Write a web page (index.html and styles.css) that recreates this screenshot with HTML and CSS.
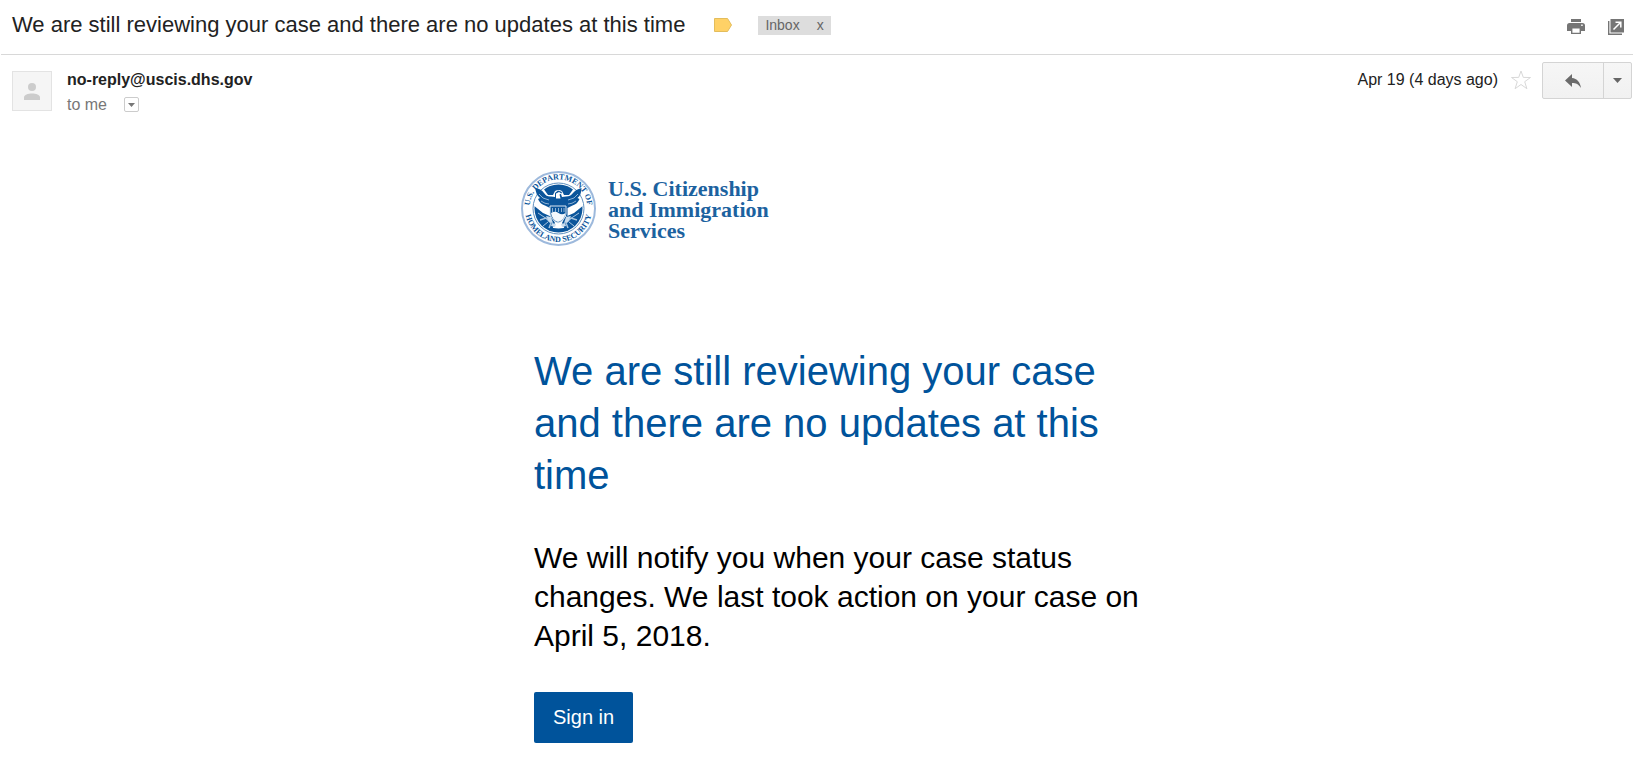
FILE: index.html
```html
<!DOCTYPE html>
<html lang="en">
<head>
<meta charset="utf-8">
<title>We are still reviewing your case and there are no updates at this time</title>
<link rel="stylesheet" href="styles.css">
</head>
<body>
<header class="subject-bar">
  <h1 class="subject">We are still reviewing your case and there are no updates at this time</h1>
  <button class="icon-btn importance" aria-label="Important">
    <svg width="18" height="14" viewBox="0 0 18 14"><path d="M.5.5h13l4 6.5-4 6.5H.5z" fill="#ffd166" stroke="#e3bd5c"/></svg>
  </button>
  <div class="label"><span>Inbox</span><button class="label-remove" aria-label="Remove label Inbox">x</button></div>
  <div class="tools">
    <button class="icon-btn" aria-label="Print all">
      <svg width="18" height="16" viewBox="0 0 18 16"><path d="M4 0h10v3H4z" fill="#757575"/><path fill-rule="evenodd" d="M2.500 4h13A2.500 2.500 0 0 1 18 6.500V12h-4V9H4v3H0V6.500A2.500 2.500 0 0 1 2.500 4zM14.200 5.500v1.500h1.500V5.500z" fill="#757575"/><path d="M4.700 8.700h8.600v5.700H4.700z" fill="#fff" stroke="#757575" stroke-width="1.400"/></svg>
    </button>
    <button class="icon-btn" aria-label="In new window">
      <svg width="16" height="16" viewBox="0 0 16 16"><path d="M.7 2v13.300H14" fill="none" stroke="#757575" stroke-width="1.400"/><path d="M2.500 0H16v13.500H2.500z" fill="#757575"/><path d="M5.500 10.500L12 4M7.500 3.200h5.300v5.300" fill="none" stroke="#fff" stroke-width="1.500"/></svg>
    </button>
  </div>
</header>
<main>
  <section class="message-head">
    <div class="avatar">
      <svg width="16" height="17" viewBox="0 0 16 17"><circle cx="8" cy="4" r="4" fill="#ccc"/><path d="M0 17v-2.500C0 11.800 4 10.500 8 10.500s8 1.300 8 4V17z" fill="#ccc"/></svg>
    </div>
    <div class="people">
      <strong class="sender">no-reply@uscis.dhs.gov</strong>
      <div class="recipient"><span>to me</span>
        <button class="details" aria-label="Show details"><svg width="7" height="4" viewBox="0 0 7 4"><path d="M0 0h7L3.500 4z" fill="#777"/></svg></button>
      </div>
    </div>
    <div class="meta">
      <time datetime="2018-04-19">Apr 19 (4 days ago)</time>
      <button class="icon-btn" aria-label="Star">
        <svg width="20" height="20" viewBox="0 0 20 20"><path d="M10 1l2.300 6.400 7.200.1-5.800 4.200 2.200 7L10 14.500 4.100 18.700l2.200-7L.5 7.500l7.200-.1z" fill="#fff" stroke="#d8d8d8"/></svg>
      </button>
    </div>
    <div class="actions">
      <button class="reply" aria-label="Reply"><svg width="16" height="14" viewBox="0 0 16 14"><path d="M7 0v4c5 .6 8 4 9 10-2.300-3.700-5-5-9-5v4L0 6.500z" fill="#6b6b6b"/></svg></button>
      <button class="more" aria-label="More"><svg width="9" height="5" viewBox="0 0 9 5"><path d="M0 0h9L4.500 5z" fill="#666"/></svg></button>
    </div>
  </section>
  <article class="mail">
    <div class="brand">
      <svg class="seal" width="75" height="75" viewBox="0 0 75 75" role="img" aria-label="U.S. Department of Homeland Security seal">
        <defs>
          <path id="arc-top" d="M9.500 45A29 29 0 1 1 65.500 45"/>
          <path id="arc-bottom" d="M4 37.500A33.500 33.500 0 0 0 71 37.500"/>
          <clipPath id="disc"><circle cx="37.500" cy="37.500" r="24"/></clipPath>
        </defs>
        <circle cx="37.500" cy="37.500" r="36.500" fill="#fff" stroke="#9db9dc" stroke-width="2"/>
        <circle cx="37.500" cy="37.500" r="25.500" fill="#fff" stroke="#5f90bf"/>
        <text class="seal-text"><textPath href="#arc-top" startOffset="50%" text-anchor="middle">U.S. DEPARTMENT OF</textPath></text>
        <text class="seal-text"><textPath href="#arc-bottom" startOffset="50%" text-anchor="middle">HOMELAND SECURITY</textPath></text>
        <g clip-path="url(#disc)">
          <path d="M22 17Q37.500 8 53 17l-5 7h-5l-2-4q-3.500-2-7 0l-2 4h-5z" fill="#0b559b"/>
          <path d="M12 34l10 8 9 4 3 6-5 11Q12 58 12 34zM63 34l-10 8-9 4-3 6 5 11Q63 58 63 34z" fill="#0b559b"/>
          <path d="M27 55q10.500 5 21 0l-2 8H29z" fill="#0b559b"/>
          <path d="M19 49l6-2 5 5-2 5M56 49l-6-2-5 5 2 5" fill="none" stroke="#a9c5df" stroke-width="1.500"/>
          <path d="M17 42l9 6M58 42l-9 6M22 55l5-4M53 55l-5-4" fill="none" stroke="#a9c5df"/>
        </g>
        <path d="M14.500 17q6 1 8.500 5t7 3.500l4 .5v-4l3-2.500 4 1.500-1 2 1 3 4-.5q4.500 0 7-3.500t8.500-5q0 7-4 10l2 1q-2 5-7 6.500l-5 2.500v8H29v-8l-5-2.500q-5-1.500-7-6.500l2-1q-4.500-3.500-4.500-10z" fill="#0b559b"/>
        <path d="M35 22.500l3-1.500 2.500 1.500-2 1 1 4H35z" fill="#fff"/>
        <path d="M18 23q3 5 10 6M57 23q-3 5-10 6M20 30q4 3 8 3M55 30q-4 3-8 3" fill="none" stroke="#8fb3d5" stroke-width="1"/>
        <path d="M29 35h16v8q-2 7-8 9-6-2-8-9z" fill="#0b559b" stroke="#dce8f3"/>
        <path d="M30 42q4-2.500 7.500 0t7 0q-1 7-7.500 9-6-2-7-9z" fill="#f4f8fc"/>
        <path d="M25 45l5 1 2 6-4-1zM50 45l-5 1-2 6 4-1zM31 52l4 1-1 3-4-1zM44 52l-4 1 1 3 4-1z" fill="#c9dced"/>
        <path d="M31.500 37v4M34.500 37v4M37.500 37v4M40.500 37v4M43 37v4" fill="none" stroke="#8fb3d5"/>
      </svg>
      <div class="wordmark">U.S. Citizenship<br>and Immigration<br>Services</div>
    </div>
    <div class="content">
      <h2 class="title">We are still reviewing your case and there are no updates at this time</h2>
      <p class="text">We will notify you when your case status changes. We last took action on your case on April 5, 2018.</p>
      <a class="sign-in" href="#">Sign in</a>
    </div>
  </article>
</main>
</body>
</html>
```
FILE: styles.css
```css
* { box-sizing: border-box; }
body {
  margin: 0;
  background: #fff;
  color: #222;
  font-family: "Liberation Sans", Arial, sans-serif;
  font-size: 16px;
}
button {
  margin: 0;
  padding: 0;
  border: 0;
  background: none;
  font: inherit;
  color: inherit;
  cursor: pointer;
}
svg { display: block; }
.icon-btn { display: flex; }
.subject-bar {
  display: flex;
  align-items: center;
  height: 55px;
  margin: 0 6px 0 1px;
  padding: 0 9px 4px 11px;
  border-bottom: 1px solid #d8d8d8;
}
.subject {
  margin: 0;
  font-size: 22px;
  line-height: 28px;
  font-weight: normal;
}
.importance { margin-left: 29px; }
.label {
  display: flex;
  gap: 17px;
  margin-left: 26px;
  padding: 0 7px;
  background: #ddd;
  color: #666;
  font-size: 14px;
  line-height: 19px;
}
.tools {
  display: flex;
  align-items: center;
  gap: 23px;
  margin-left: auto;
  padding-top: 3px;
}
.message-head {
  display: flex;
  align-items: flex-start;
  padding: 7px 7px 0 12px;
}
.avatar {
  display: flex;
  align-items: center;
  justify-content: center;
  width: 40px;
  height: 40px;
  margin-top: 9px;
  border: 1px solid #e3e3e3;
  background: #f5f5f5;
}
.people {
  margin: 5px 0 0 15px;
  line-height: 25px;
}
.sender { display: block; }
.recipient {
  display: flex;
  align-items: center;
  gap: 17px;
  color: #777;
}
.details {
  display: flex;
  align-items: center;
  justify-content: center;
  width: 15px;
  height: 15px;
  border: 1px solid #ccc;
  border-radius: 2px;
}
.meta {
  display: flex;
  align-items: center;
  gap: 13px;
  margin: 5px 11px 0 auto;
  line-height: 25px;
}
.actions {
  display: flex;
  height: 37px;
  border: 1px solid #d4d4d4;
  border-radius: 2px;
  background: linear-gradient(#f6f6f6, #f1f1f1);
}
.actions button {
  display: flex;
  align-items: center;
  justify-content: center;
}
.reply { width: 60px; }
.more {
  width: 28px;
  border-left: 1px solid #d4d4d4;
}
.mail {
  max-width: 643px;
  margin: 54px auto 0;
  padding-bottom: 28px;
}
.brand {
  display: flex;
  gap: 12px;
  padding-left: 23px;
}
.seal-text {
  fill: #0b559b;
  font-family: "Liberation Serif", serif;
  font-size: 8px;
  font-weight: bold;
}
.wordmark {
  padding-top: 7px;
  color: #1c629f;
  font-family: "Liberation Serif", serif;
  font-size: 22px;
  font-weight: bold;
  line-height: 21px;
}
.content { padding: 99px 0 0 36px; }
.title {
  margin: 0;
  color: #00539b;
  font-size: 40px;
  line-height: 52px;
  font-weight: normal;
}
.text {
  margin: 37px 0;
  color: #000;
  font-size: 30px;
  line-height: 39px;
}
.sign-in {
  display: inline-block;
  padding: 12px 19px;
  border-radius: 2px;
  background: #00539b;
  color: #fff;
  font-size: 20px;
  line-height: 27px;
  text-decoration: none;
}
```
